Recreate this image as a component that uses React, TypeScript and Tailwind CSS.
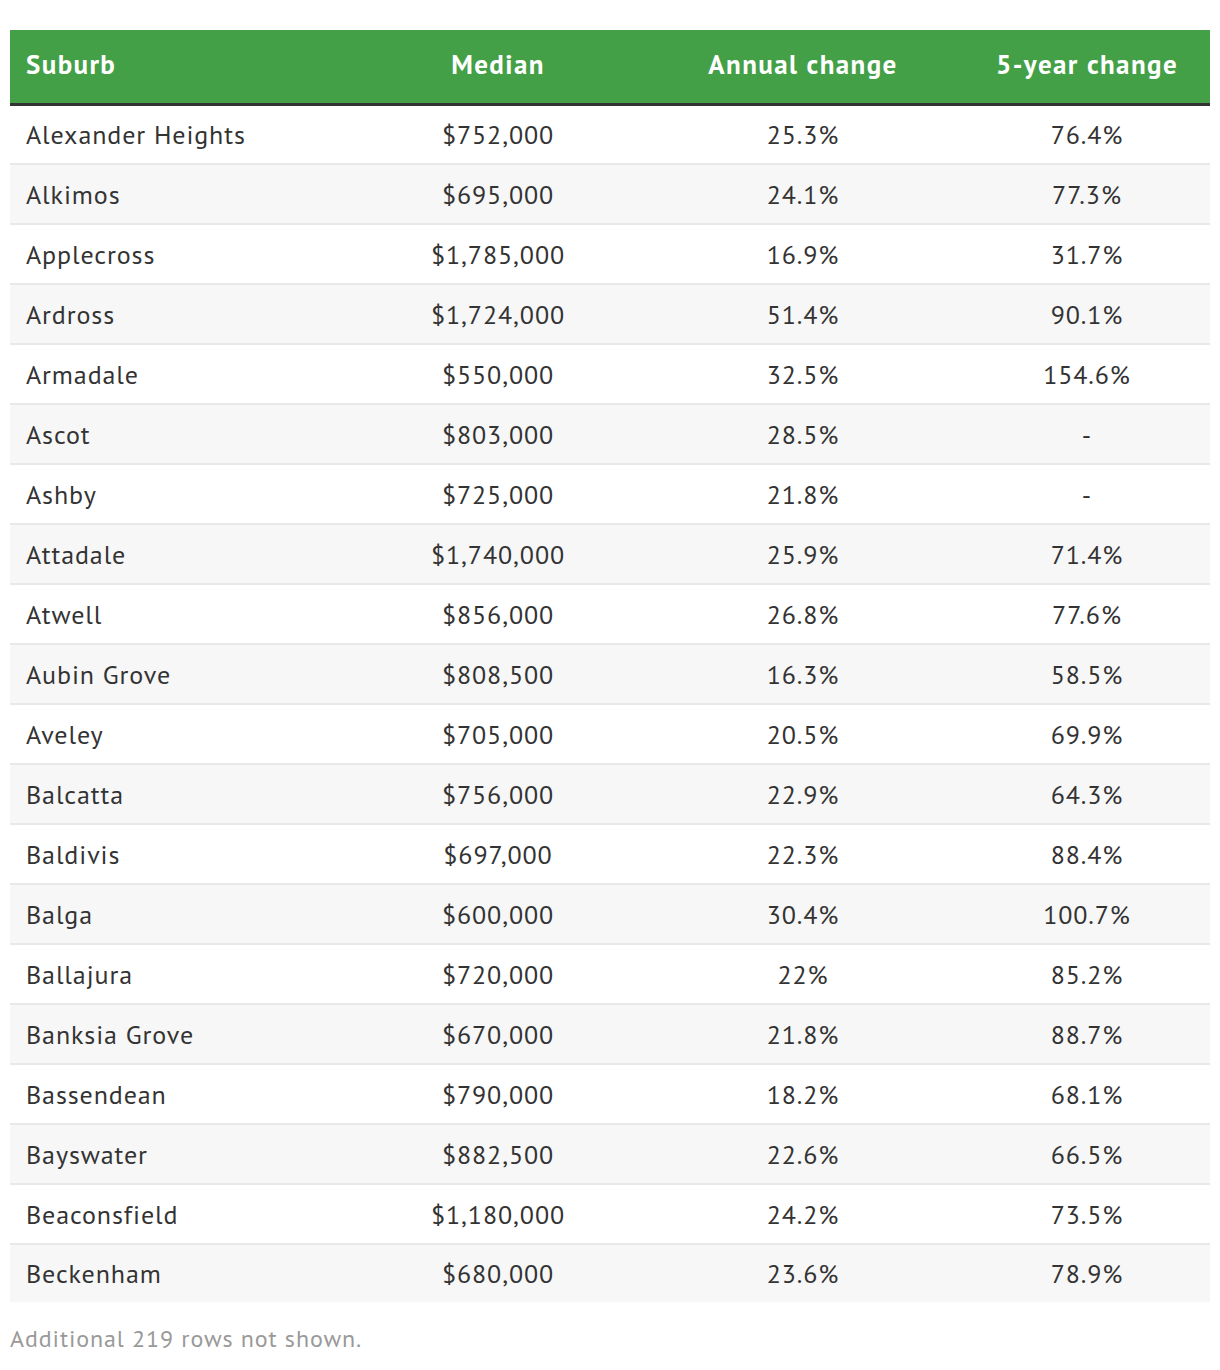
import React from "react";

const rows: [string, string, string, string][] = [
  ["Alexander Heights", "$752,000", "25.3%", "76.4%"],
  ["Alkimos", "$695,000", "24.1%", "77.3%"],
  ["Applecross", "$1,785,000", "16.9%", "31.7%"],
  ["Ardross", "$1,724,000", "51.4%", "90.1%"],
  ["Armadale", "$550,000", "32.5%", "154.6%"],
  ["Ascot", "$803,000", "28.5%", "-"],
  ["Ashby", "$725,000", "21.8%", "-"],
  ["Attadale", "$1,740,000", "25.9%", "71.4%"],
  ["Atwell", "$856,000", "26.8%", "77.6%"],
  ["Aubin Grove", "$808,500", "16.3%", "58.5%"],
  ["Aveley", "$705,000", "20.5%", "69.9%"],
  ["Balcatta", "$756,000", "22.9%", "64.3%"],
  ["Baldivis", "$697,000", "22.3%", "88.4%"],
  ["Balga", "$600,000", "30.4%", "100.7%"],
  ["Ballajura", "$720,000", "22%", "85.2%"],
  ["Banksia Grove", "$670,000", "21.8%", "88.7%"],
  ["Bassendean", "$790,000", "18.2%", "68.1%"],
  ["Bayswater", "$882,500", "22.6%", "66.5%"],
  ["Beaconsfield", "$1,180,000", "24.2%", "73.5%"],
  ["Beckenham", "$680,000", "23.6%", "78.9%"],
];

export default function App() {
  return (
    <div
      className="bg-white w-[1220px] min-h-[1370px] pt-[30px] px-[10px] text-[#333]"
      style={{ fontFamily: '"PT Sans", "Open Sans", "Noto Sans", sans-serif' }}
    >
      <table className="w-[1200px] table-fixed border-collapse">
        <colgroup>
          <col className="w-[344px]" />
          <col className="w-[288px]" />
          <col className="w-[322px]" />
          <col className="w-[246px]" />
        </colgroup>
        <thead>
          <tr className="bg-[#43a047] text-white h-[74px] border-b-[3px] border-[#333]">
            <th className="text-left pl-[16px] pb-[4px] font-bold text-[27px] tracking-[1.4px]">Suburb</th>
            <th className="text-center pb-[4px] font-bold text-[27px] tracking-[1.4px]">Median</th>
            <th className="text-center pb-[4px] font-bold text-[27px] tracking-[1.4px]">Annual change</th>
            <th className="text-center pb-[4px] font-bold text-[27px] tracking-[1.4px]">5-year change</th>
          </tr>
        </thead>
        <tbody>
          {rows.map((r, i) => (
            <tr
              key={r[0]}
              className={
                (i % 2 === 1 ? "bg-[#f7f7f7] " : "bg-white ") +
                (i < rows.length - 1 ? "border-b-2 border-[#e8e8e8] h-[60px] " : "h-[58px] ") +
                "text-[26px] tracking-[0.9px]"
              }
            >
              <td className="pl-[16px] text-left">{r[0]}</td>
              <td className="text-center">{r[1]}</td>
              <td className="text-center">{r[2]}</td>
              <td className="text-center">{r[3]}</td>
            </tr>
          ))}
        </tbody>
      </table>
      <p className="mt-[19px] text-[24px] leading-[36px] tracking-[0.9px] text-[#999]">
        Additional 219 rows not shown.
      </p>
    </div>
  );
}
